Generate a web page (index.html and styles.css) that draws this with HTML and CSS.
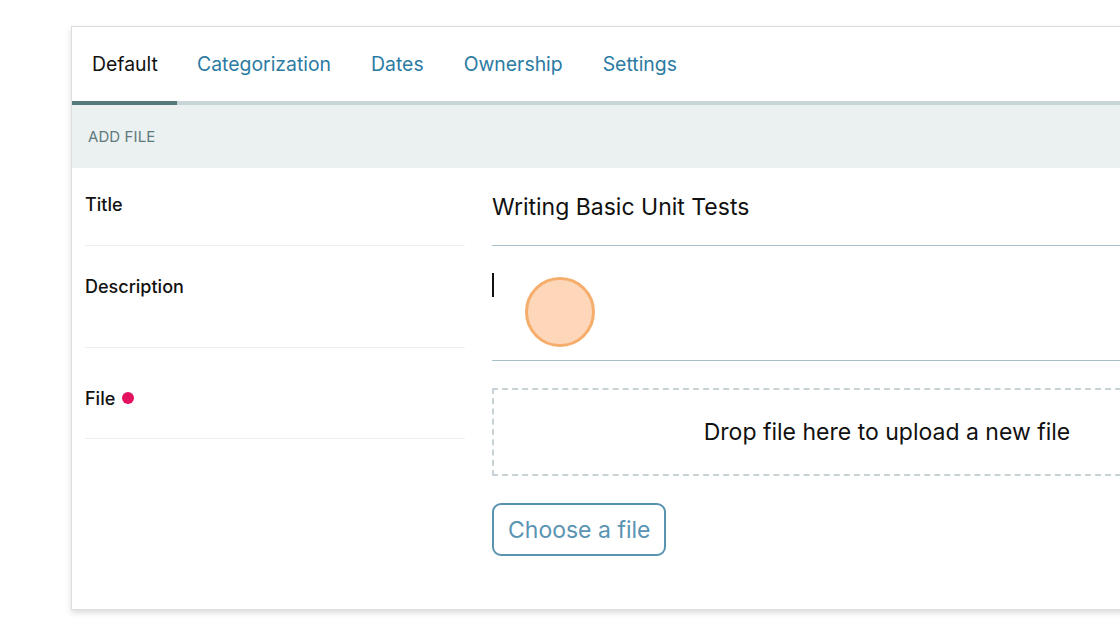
FILE: index.html
```html
<!DOCTYPE html>
<html>
<head>
<meta charset="utf-8">
<link rel="stylesheet" href="styles.css">
</head>
<body>
<div class="page">
  <div class="card">
    <nav class="tabs">
      <a class="tab active">Default</a>
      <a class="tab">Categorization</a>
      <a class="tab">Dates</a>
      <a class="tab">Ownership</a>
      <a class="tab">Settings</a>
    </nav>
    <div class="tab-line"><div class="tab-line-active"></div></div>
    <div class="section-head">ADD FILE</div>
    <div class="form">
      <div class="labels">
        <div class="label-row row-title">Title</div>
        <div class="label-row row-desc">Description</div>
        <div class="label-row row-file">File <span class="req"></span></div>
      </div>
      <div class="fields">
        <div class="input-title">Writing Basic Unit Tests</div>
        <div class="input-desc"><span class="caret"></span><span class="cursor-dot"></span></div>
        <div class="dropzone">Drop file here to upload a new file</div>
        <div class="btn-row"><button class="btn">Choose a file</button></div>
      </div>
    </div>
  </div>
</div>
</body>
</html>
```

FILE: styles.css
```css
html, body {
  margin: 0;
  padding: 0;
  background: #ffffff;
  overflow: hidden;
  width: 1120px;
  height: 626px;
}
body {
  font-family: Inter, "Noto Sans", sans-serif;
  color: #111;
}
.page {
  padding: 26px 0 0 71px;
}
.card {
  width: 1210px;
  border: 1px solid #d9dedf;
  background: #fff;
  box-shadow: 0 3px 6px rgba(0,0,0,0.14);
}
.tabs {
  display: flex;
  height: 74px;
  align-items: center;
}
.tab {
  padding: 1px 20px 0;
  font-size: 19.4px;
  color: #2b7ba3;
  line-height: 73px;
  cursor: pointer;
}
.tab.active {
  color: #111;
  width: 65px;
  white-space: nowrap;
}
.tab-line {
  height: 4px;
  background: #c8d6da;
}
.tab-line-active {
  width: 105px;
  height: 4px;
  background: #557a7a;
}
.section-head {
  height: 63px;
  background: #ebf0f1;
  display: flex;
  align-items: center;
  padding-left: 16px;
  font-size: 15px;
  color: #5f7a7d;
  letter-spacing: 0.1px;
}
.form {
  display: flex;
  gap: 27px;
  padding: 0 0 53px 13px;
}
.labels {
  width: 380px;
  flex: none;
}
.label-row {
  border-bottom: 1px solid #eceeef;
  font-size: 18px;
  font-weight: 500;
  color: #111;
  box-sizing: border-box;
  display: flex;
  align-items: flex-start;
  gap: 7px;
  line-height: 22px;
}
.row-title { height: 78px; padding-top: 26px; }
.row-desc { height: 102px; padding-top: 30px; }
.row-file { height: 91px; padding-top: 40px; }
.req {
  width: 12px;
  height: 12px;
  border-radius: 50%;
  background: #e3125f;
  margin-top: 4px;
}
.fields {
  flex: 1;
  display: flex;
  flex-direction: column;
}
.input-title {
  height: 78px;
  box-sizing: border-box;
  border-bottom: 1px solid #a9bfca;
  padding-top: 25px;
  font-size: 23px;
  line-height: 28px;
  color: #111;
}
.input-desc {
  height: 115px;
  box-sizing: border-box;
  border-bottom: 1px solid #a9bfca;
  position: relative;
}
.caret {
  position: absolute;
  left: 0;
  top: 27px;
  width: 1.5px;
  height: 24px;
  background: #111;
}
.cursor-dot {
  position: absolute;
  left: 33px;
  top: 31px;
  width: 70px;
  height: 70px;
  border-radius: 50%;
  background: #fed6b9;
  border: 3px solid #f6ad6c;
  box-sizing: border-box;
}
.dropzone {
  margin-top: 27px;
  height: 88px;
  box-sizing: border-box;
  border: 2px dashed #c6d2d5;
  display: flex;
  align-items: center;
  justify-content: center;
  font-size: 23px;
  color: #111;
  padding-bottom: 1px;
}
.btn-row {
  margin-top: 27px;
  display: flex;
}
.btn {
  height: 53px;
  padding: 0 14px;
  border: 2px solid #5893b0;
  border-radius: 9px;
  background: #fff;
  font-family: Inter, "Noto Sans", sans-serif;
  font-size: 23px;
  color: #5a94b2;
  cursor: pointer;
}
```
